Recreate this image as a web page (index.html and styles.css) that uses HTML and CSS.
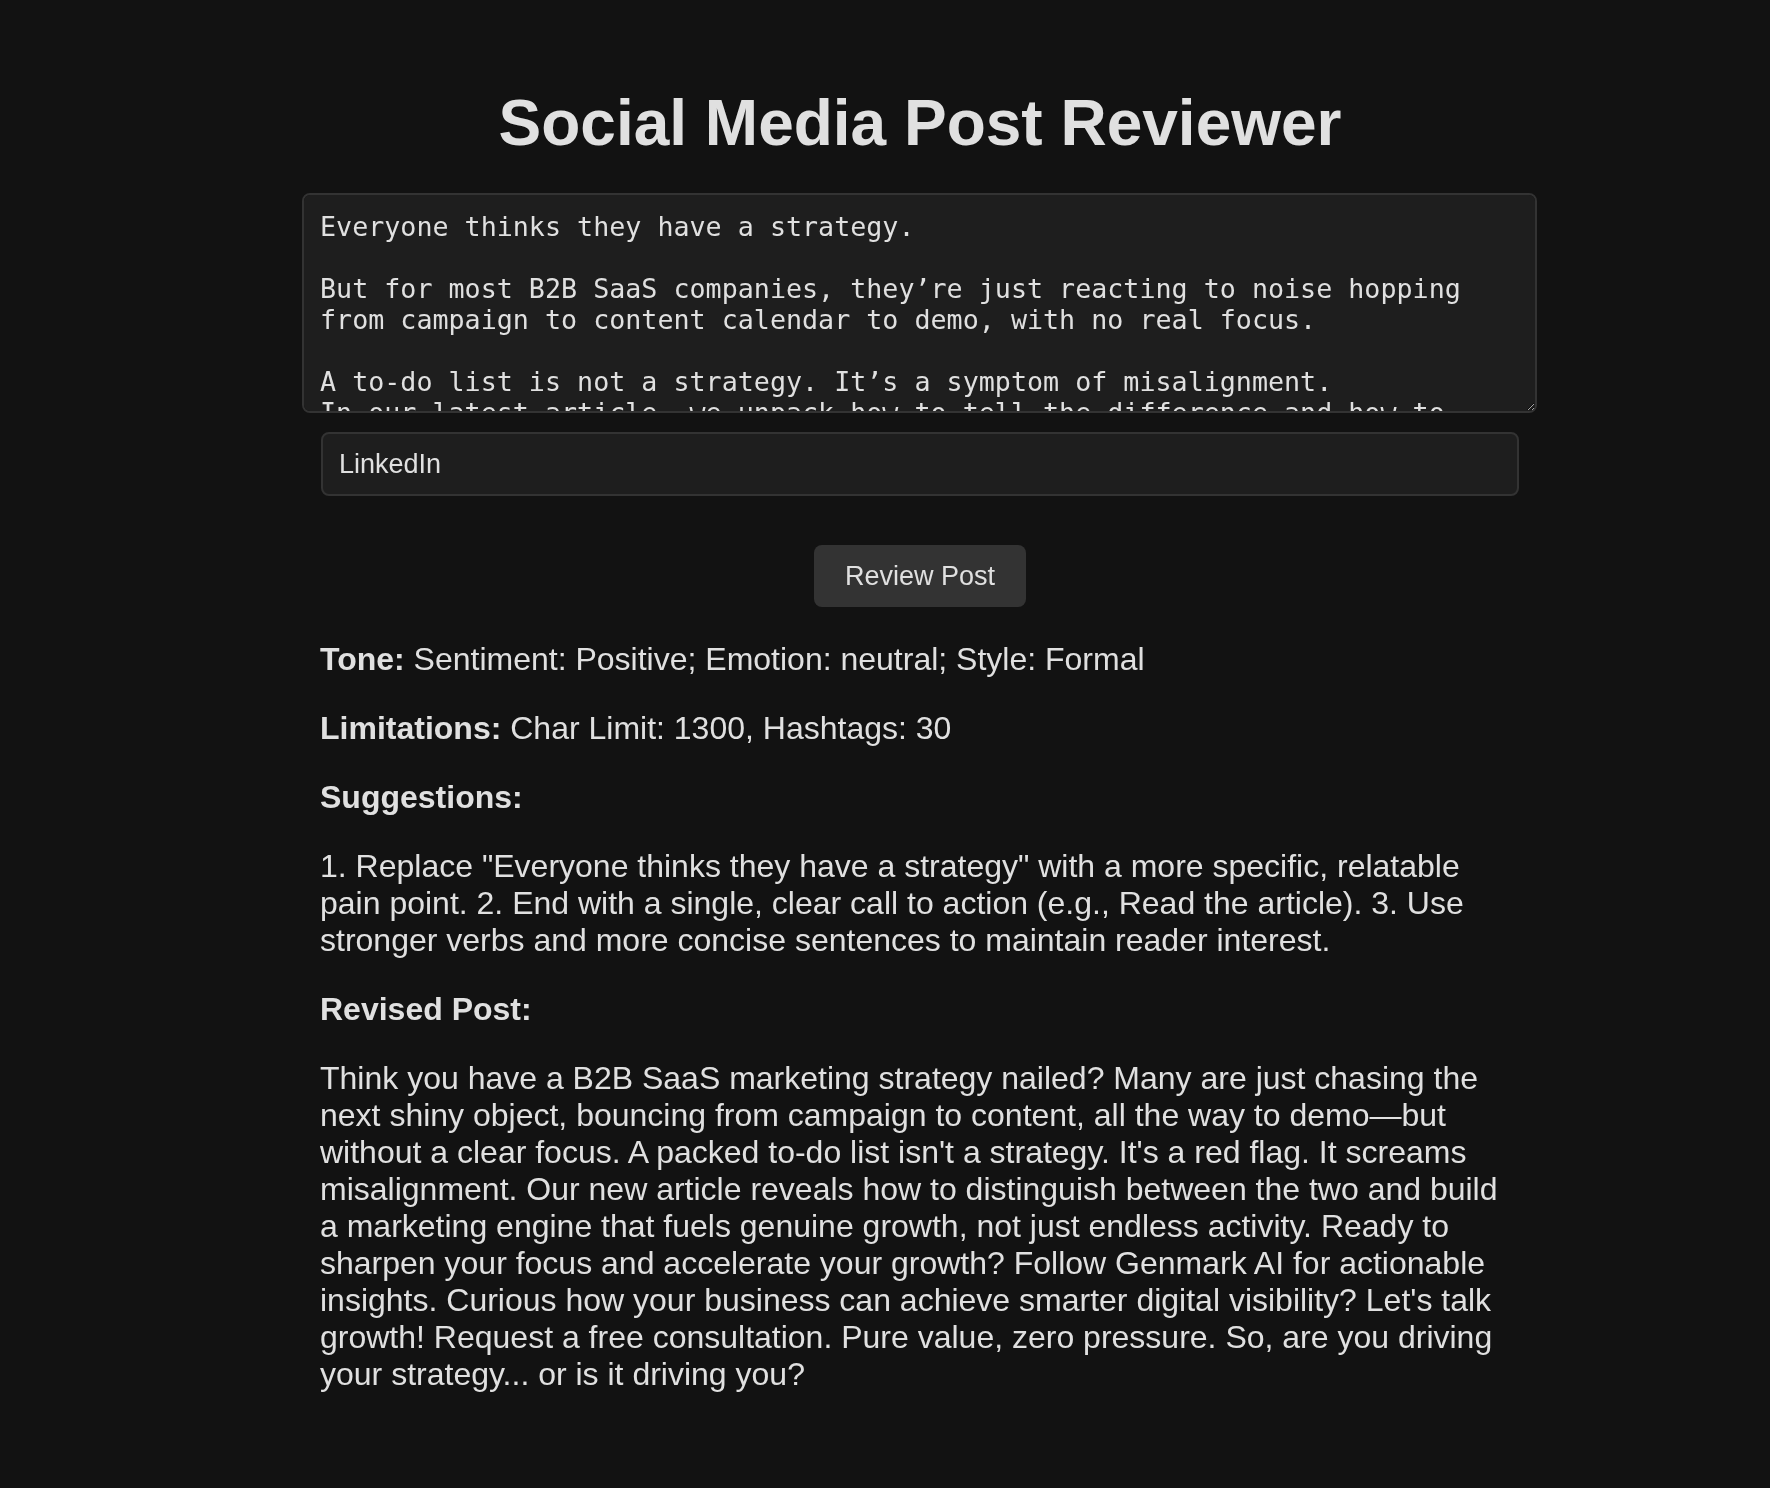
FILE: index.html
```html
<!DOCTYPE html>
<html lang="en">
<head>
<meta charset="utf-8">
<title>Social Media Post Reviewer</title>
<link rel="stylesheet" href="styles.css">
</head>
<body>
<main class="app">
  <h1 class="title">Social Media Post Reviewer</h1>
  <textarea class="post-input">Everyone thinks they have a strategy.

But for most B2B SaaS companies, they’re just reacting to noise hopping from campaign to content calendar to demo, with no real focus.

A to-do list is not a strategy. It’s a symptom of misalignment.
In our latest article, we unpack how to tell the difference and how to build a marketing engine that drives real growth, not just more activity.</textarea>
  <input class="platform-input" type="text" value="LinkedIn">
  <div class="actions">
    <button class="review-btn" type="button">Review Post</button>
  </div>
  <section class="results">
    <p><strong>Tone:</strong> Sentiment: Positive; Emotion: neutral; Style: Formal</p>
    <p><strong>Limitations:</strong> Char Limit: 1300, Hashtags: 30</p>
    <p><strong>Suggestions:</strong></p>
    <p>1. Replace "Everyone thinks they have a strategy" with a more specific, relatable pain point. 2. End with a single, clear call to action (e.g., Read the article). 3. Use stronger verbs and more concise sentences to maintain reader interest.</p>
    <p><strong>Revised Post:</strong></p>
    <p>Think you have a B2B SaaS marketing strategy nailed? Many are just chasing the next shiny object, bouncing from campaign to content, all the way to demo—but without a clear focus. A packed to-do list isn't a strategy. It's a red flag. It screams misalignment. Our new article reveals how to distinguish between the two and build a marketing engine that fuels genuine growth, not just endless activity. Ready to sharpen your focus and accelerate your growth? Follow Genmark AI for actionable insights. Curious how your business can achieve smarter digital visibility? Let's talk growth! Request a free consultation. Pure value, zero pressure. So, are you driving your strategy... or is it driving you?</p>
  </section>
</main>
</body>
</html>
```

FILE: styles.css
```css
html, body {
  margin: 0;
  padding: 0;
  background: #121212;
}

body {
  color: #e0e0e0;
  font-family: "Liberation Sans", Arial, Helvetica, sans-serif;
  font-size: 32px;
}

.app {
  width: 1200px;
  margin: 0 0 0 320px;
  padding-bottom: 80px;
}

.title {
  margin: 85px 0 32px;
  font-size: 64px;
  font-weight: 700;
  line-height: 76px;
  text-align: center;
  color: #e0e0e0;
}

.post-input {
  display: block;
  box-sizing: border-box;
  width: 1235px;
  height: 220px;
  margin: 0 0 0 -18px;
  padding: 16px 16px 14px;
  border: 2px solid #333333;
  border-radius: 8px;
  background: #1e1e1e;
  color: #e0e0e0;
  font-family: "DejaVu Sans Mono", "Liberation Mono", monospace;
  font-size: 26.7px;
  line-height: 31px;
  resize: vertical;
  outline: none;
}

.platform-input {
  display: block;
  box-sizing: border-box;
  width: 1198px;
  height: 64px;
  margin: 19px 0 0 1px;
  padding: 0 16px;
  border: 2px solid #333333;
  border-radius: 8px;
  background: #1e1e1e;
  color: #e0e0e0;
  font-family: "Liberation Sans", Arial, Helvetica, sans-serif;
  font-size: 27px;
  outline: none;
}

.actions {
  display: flex;
  justify-content: center;
  margin-top: 49px;
}

.review-btn {
  box-sizing: border-box;
  width: 212px;
  height: 62px;
  padding: 0;
  border: none;
  border-radius: 8px;
  background: #333333;
  color: #e0e0e0;
  font-family: "Liberation Sans", Arial, Helvetica, sans-serif;
  font-size: 27px;
  cursor: pointer;
}

.results {
  margin-top: 34px;
}

.results p {
  margin: 0 0 32px;
  line-height: 37px;
}

.results strong {
  font-weight: 700;
}
```
